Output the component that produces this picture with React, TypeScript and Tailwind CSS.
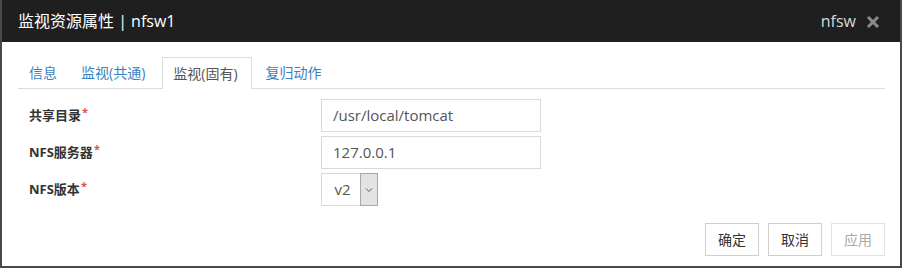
import * as React from 'react';

const font = '[font-family:"Open_Sans","Noto_Sans_CJK_SC",sans-serif]';

function Req({ children }: { children: React.ReactNode }) {
  return (
    <div className="flex items-center text-[13px] font-bold text-[#333]">
      <span>
        {children}
        <span className="relative -top-[4px] ml-px text-[11px] text-[#d9534f]">*</span>
      </span>
    </div>
  );
}

export default function App() {
  return (
    <div className={`w-[904px] h-[270px] bg-white ${font}`}>
      <div className="w-[902px] h-[268px] border-x-2 border-b-2 border-[#4a4a4a] flex flex-col">
        {/* Header */}
        <div className="h-[42px] bg-[#1f1f1f] flex items-center justify-between pl-[16px] pr-[20px]">
          <span className="text-white text-[16px]">监视资源属性 | nfsw1</span>
          <div className="flex items-center gap-[10px]">
            <span className="text-[#d8d8d8] text-[16px]">nfsw</span>
            <svg width="14" height="14" viewBox="0 0 14 14" className="mt-px">
              <path d="M2 2L12 12M12 2L2 12" stroke="#8a8a8a" strokeWidth="3" />
            </svg>
          </div>
        </div>

        <div className="pl-[16px] pr-[15px] pt-[15px] flex flex-col">
          {/* Tabs */}
          <div className="flex h-[32px] border-b border-[#dddddd] text-[14px]">
            <div className="pl-[11px] pr-[12px] flex items-center text-[#3a7fc1]">信息</div>
            <div className="px-[12px] flex items-center text-[#3a7fc1]">监视(共通)</div>
            <div className="ml-[5px] pl-[10px] pr-[13px] border border-b-0 border-[#dddddd] bg-white -mb-px flex items-center text-[#555]">
              监视(固有)
            </div>
            <div className="pl-[14px] flex items-center text-[#3a7fc1]">复归动作</div>
          </div>

          {/* Form */}
          <div className="mt-[10px] pl-[11px] grid grid-cols-[292px_220px] gap-y-[4px]">
            <Req>共享目录</Req>
            <div className="h-[33px] border border-[#dadada] flex items-center px-[11px] text-[15px] text-[#555]">
              /usr/local/tomcat
            </div>
            <Req>NFS服务器</Req>
            <div className="h-[33px] border border-[#dadada] flex items-center px-[11px] text-[15px] text-[#555]">
              127.0.0.1
            </div>
            <Req>NFS版本</Req>
            <div className="h-[33px] w-[57px] border border-[#dadada] flex">
              <div className="flex-1 flex items-center justify-center pl-[3px] text-[15px] text-[#555]">v2</div>
              <div className="w-[18px] bg-[#e3e3e3] border border-[#a8a8a8] -my-px -mr-px flex items-center justify-center">
                <svg width="8" height="6" viewBox="0 0 8 6">
                  <path d="M1 1.5L4 4.5L7 1.5" fill="none" stroke="#555" strokeWidth="1" />
                </svg>
              </div>
            </div>
          </div>

          {/* Buttons */}
          <div className="mt-[17px] flex justify-end gap-[9px]">
            <button className="w-[54px] h-[33px] border border-[#cfcfcf] bg-white text-[14px] text-[#333]">确定</button>
            <button className="w-[54px] h-[33px] border border-[#cfcfcf] bg-white text-[14px] text-[#333]">取消</button>
            <button className="w-[54px] h-[33px] border border-[#e2e2e2] bg-white text-[14px] text-[#aaa]">应用</button>
          </div>
        </div>
      </div>
    </div>
  );
}
